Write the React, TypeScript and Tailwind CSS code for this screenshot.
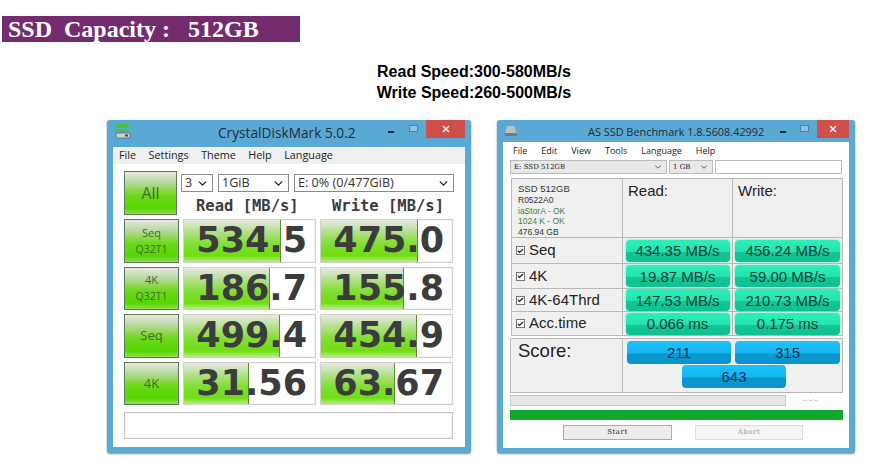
import { Check, ChevronDown, X } from "lucide-react";

const cdmRows = [
  { top: "Seq", bottom: "Q32T1", read: "534.5", readBar: "w-[97px]", write: "475.0", writeBar: "w-[97px]" },
  { top: "4K", bottom: "Q32T1", read: "186.7", readBar: "w-[86px]", write: "155.8", writeBar: "w-[83px]" },
  { top: "Seq", bottom: "", read: "499.4", readBar: "w-[96px]", write: "454.9", writeBar: "w-[96px]" },
  { top: "4K", bottom: "", read: "31.56", readBar: "w-[65px]", write: "63.67", writeBar: "w-[74px]" },
];

const ssdRows = [
  { label: "Seq", read: "434.35 MB/s", write: "456.24 MB/s", h: "h-[26px]" },
  { label: "4K", read: "19.87 MB/s", write: "59.00 MB/s", h: "h-[25px]" },
  { label: "4K-64Thrd", read: "147.53 MB/s", write: "210.73 MB/s", h: "h-[23px]" },
  { label: "Acc.time", read: "0.066 ms", write: "0.175 ms", h: "h-[24px]" },
];

function TitleButtons({ closeWidth, gap }: { closeWidth: string; gap: string }) {
  return (
    <div className="flex shrink-0 items-start">
      <div className={`mt-[11px] ${gap} h-[2px] w-[6px] bg-[#1d2b36]`} />
      <div className="mt-[5px] mr-[8px] h-[7px] w-[9px] border border-[#4b83a6] bg-[#8cc4e2]" />
      <div className={`flex h-[18px] ${closeWidth} items-center justify-center bg-[#cf4f4b]`}>
        <X size={10} strokeWidth={3} className="text-white" />
      </div>
    </div>
  );
}

function CdmSelect({ label, width }: { label: string; width: string }) {
  return (
    <div className={`flex h-[18px] ${width} items-center justify-between border border-[#8a8a8a] bg-white pl-[3px] pr-[3px] text-[12.6px] text-[#333]`}>
      <span>{label}</span>
      <ChevronDown size={13} strokeWidth={2.5} className="text-[#222]" />
    </div>
  );
}

function CdmValue({ value, bar }: { value: string; bar: string }) {
  return (
    <div className="relative h-full w-[133px] overflow-hidden border border-[#d0d0d0] bg-white shadow-[inset_0_0_1px_#999]">
      <div className={`absolute inset-y-0 left-0 ${bar} border-r border-[#5c8f33] bg-[linear-gradient(#e6eae2_0%,#b4e08c_28%,#80de30_58%,#70de14_85%,#b4ee80_100%)]`} />
      <div className="relative flex h-full items-center justify-end pr-[8px] font-['DejaVu_Sans'] text-[35px] font-bold leading-none text-[#3c3c3c]">
        {value}
      </div>
    </div>
  );
}

function CdmButton({ top, bottom }: { top: string; bottom: string }) {
  return (
    <div className="flex h-full w-[55px] flex-col items-center justify-center border border-[#5f7a5a] bg-[linear-gradient(#e4e8e0_0%,#b9d8a0_25%,#6ed81c_55%,#55d600_85%,#8fe050_100%)] text-center text-[#3f6b2c]">
      <div className={bottom ? "text-[11px] leading-[16px]" : "text-[13px]"}>{top}</div>
      {bottom && <div className="text-[10.5px] leading-[16px]">{bottom}</div>}
    </div>
  );
}

function CrystalDiskMark() {
  return (
    <div className="flex h-[333px] w-[364px] flex-col rounded-[3px] bg-[#5aa9d4] px-[6px] pb-[6px] font-['Open_Sans'] shadow-[0_1px_2px_#888]">
      <div className="flex h-[27px] shrink-0 items-start">
        <svg width="16" height="16" viewBox="0 0 16 16" className="mt-[3px] ml-[2px] shrink-0">
          <rect x="1" y="1" width="13" height="4" rx="1.5" fill="#47c23a" />
          <rect x="1" y="6" width="13" height="3" rx="1.5" fill="#47c23a" />
          <rect x="1" y="10" width="14" height="5" rx="1" fill="#ccd2d4" stroke="#58666c" strokeWidth="0.8" />
          <rect x="10" y="11.5" width="3" height="2" fill="#444" />
        </svg>
        <div className="mt-[3px] flex-1 whitespace-nowrap pl-[87px] text-[13.7px] leading-[19px] text-[#1e2c38]">CrystalDiskMark 5.0.2</div>
        <TitleButtons closeWidth="w-[39px]" gap="mr-[15px]" />
      </div>
      <div className="flex h-[17px] shrink-0 items-center gap-[12.5px] bg-[#f0f0f0] pl-[6px] text-[10.8px] text-[#222]">
        <span>File</span>
        <span>Settings</span>
        <span>Theme</span>
        <span>Help</span>
        <span>Language</span>
      </div>
      <div className="flex flex-1 flex-col bg-white px-[11px] pt-[7px]">
        <div className="flex h-[44px] gap-[4px]">
          <div className="flex w-[55px] items-center justify-center border border-[#5f7a5a] bg-[linear-gradient(#e4e8e0_0%,#b9d8a0_25%,#6ed81c_55%,#55d600_85%,#8fe050_100%)] text-[16px] text-[#3f6b2c]">
            All
          </div>
          <div className="flex flex-1 flex-col">
            <div className="mt-[3px] flex gap-[5px]">
              <CdmSelect label="3" width="w-[32px]" />
              <CdmSelect label="1GiB" width="w-[71px]" />
              <CdmSelect label="E: 0% (0/477GiB)" width="w-[160px]" />
            </div>
            <div className="mt-[4px] flex font-['DejaVu_Sans_Mono'] text-[15.5px] font-bold leading-[20px] text-[#3c3c3c]">
              <div className="w-[137px] pl-[15px]">Read [MB/s]</div>
              <div className="pl-[14px]">Write [MB/s]</div>
            </div>
          </div>
        </div>
        <div className="mt-[4px] flex flex-col gap-[4px]">
          {cdmRows.map((r, i) => (
            <div key={i} className="flex h-[43.5px] gap-[4px]">
              <CdmButton top={r.top} bottom={r.bottom} />
              <CdmValue value={r.read} bar={r.readBar} />
              <CdmValue value={r.write} bar={r.writeBar} />
            </div>
          ))}
        </div>
        <div className="mt-[7px] h-[27px] w-[329px] border border-[#c4c4c4] bg-white shadow-[inset_0_0_1px_#aaa]" />
      </div>
    </div>
  );
}

function SsdCheck() {
  return (
    <div className="mr-[4px] ml-[4px] flex h-[9px] w-[9px] shrink-0 items-center justify-center border border-[#777] bg-white">
      <Check size={8} strokeWidth={4} className="text-[#222]" />
    </div>
  );
}

function SsdPill({ value, width }: { value: string; width: string }) {
  return (
    <div className={`flex h-[22px] ${width} items-center justify-center rounded-[4px] bg-[linear-gradient(#2cf0b8_0%,#24e4ae_52%,#12c596_56%,#10c090_100%)] text-[15px] leading-none text-[#173f34] shadow-[0_0_2px_#3fe8bd]`}>
      {value}
    </div>
  );
}

function ScorePill({ value, width }: { value: string; width: string }) {
  return (
    <div className={`flex h-[23px] ${width} items-center justify-center rounded-[4px] bg-[linear-gradient(#1cc3fb_0%,#14b6f2_52%,#0a97cf_56%,#0a94cc_100%)] text-[15px] leading-none text-[#0f3350]`}>
      {value}
    </div>
  );
}

function AsSsd() {
  return (
    <div className="flex h-[333px] w-[358px] flex-col rounded-[3px] bg-[#5aa9d4] px-[6px] pb-[5px] font-['Liberation_Sans'] shadow-[0_1px_2px_#888]">
      <div className="flex h-[22px] shrink-0 items-start">
        <svg width="14" height="14" viewBox="0 0 14 14" className="mt-[3px] ml-[1px] shrink-0">
          <path d="M1 10 L3 3 H10 L13 10 Z" fill="#b9c0c2" />
          <path d="M4 3 L6 1.5 L8 3 Z" fill="#8d9698" />
          <rect x="1" y="10" width="12" height="3" fill="#6f7a7d" />
        </svg>
        <div className="mt-[3px] min-w-0 flex-1 whitespace-nowrap pl-[70px] font-['Open_Sans'] text-[10.9px] leading-[18px] text-[#1e2c38]">AS SSD Benchmark 1.8.5608.42992</div>
        <TitleButtons closeWidth="w-[32px]" gap="mr-[14px]" />
      </div>
      <div className="flex flex-1 flex-col bg-white px-[7px]">
        <div className="flex h-[18px] shrink-0 items-center gap-[14px] pl-[3px] font-['Open_Sans'] text-[9px] text-[#222]">
          <span>File</span>
          <span>Edit</span>
          <span>View</span>
          <span>Tools</span>
          <span>Language</span>
          <span>Help</span>
        </div>
        <div className="flex h-[14px] shrink-0 gap-[2px] font-['DejaVu_Serif'] text-[7px] text-[#222]">
          <div className="flex w-[157px] items-center justify-between border border-[#bbb] bg-[#e8e8e8] px-[3px]">
            <span>E: SSD 512GB</span>
            <ChevronDown size={10} className="text-[#444]" />
          </div>
          <div className="flex w-[44px] items-center justify-between border border-[#bbb] bg-[#e8e8e8] px-[3px]">
            <span>1 GB</span>
            <ChevronDown size={10} className="text-[#444]" />
          </div>
          <div className="flex-1 border border-[#bbb] bg-white" />
        </div>
        <div className="mt-[4px] ml-[1px] flex h-[59px] w-[332px] shrink-0 border border-b-0 border-[#b8b8b8] bg-[#f0f0f0]">
          <div className="w-[111px] border-r border-[#b8b8b8] pl-[6px] pt-[3px] text-[8.5px] leading-[10.5px] text-[#333]">
            <div className="text-[9.5px] leading-[13px]">SSD 512GB</div>
            <div>R0522A0</div>
            <div className="text-[#3f7f3f]">iaStorA - OK</div>
            <div className="text-[#3f7f3f]">1024 K - OK</div>
            <div>476.94 GB</div>
          </div>
          <div className="w-[110px] border-r border-[#b8b8b8] pl-[5px] pt-[1px] text-[15px] text-[#222]">Read:</div>
          <div className="pl-[5px] pt-[1px] text-[15px] text-[#222]">Write:</div>
        </div>
        <div className="ml-[1px] w-[332px] border-b border-[#b8b8b8] bg-[#f0f0f0]">
          {ssdRows.map((r) => (
            <div key={r.label} className={`flex ${r.h} border-x border-t border-[#b8b8b8]`}>
              <div className="flex w-[111px] items-center border-r border-[#b8b8b8] text-[15px] text-[#222]">
                <SsdCheck />
                {r.label}
              </div>
              <div className="flex w-[110px] items-center justify-center border-r border-[#b8b8b8]">
                <SsdPill value={r.read} width="w-[104px]" />
              </div>
              <div className="flex flex-1 items-center justify-center">
                <SsdPill value={r.write} width="w-[105px]" />
              </div>
            </div>
          ))}
        </div>
        <div className="mt-[2px] flex h-[55px] w-[333px] shrink-0 border border-[#b8b8b8] bg-[#f0f0f0]">
          <div className="w-[112px] border-r border-[#b8b8b8] pl-[7px] text-[18.5px] leading-[24px] text-[#222]">Score:</div>
          <div className="flex-1 pl-[4px] pt-[2px]">
            <div className="flex gap-[4px]">
              <ScorePill value="211" width="w-[104px]" />
              <ScorePill value="315" width="w-[105px]" />
            </div>
            <div className="mt-[1px] ml-[55px]">
              <ScorePill value="643" width="w-[104px]" />
            </div>
          </div>
        </div>
        <div className="mt-[2px] flex h-[11px] shrink-0 items-center">
          <div className="h-full w-[276px] border border-[#c8c8c8] bg-[#e6e6e6]" />
          <div className="pl-[17px] text-[6px] text-[#777]">--:--:--</div>
        </div>
        <div className="mt-[4px] h-[10px] w-[333px] shrink-0 bg-[#10a82e]" />
        <div className="mt-[5px] flex h-[15px] shrink-0 gap-[23px] pl-[53px] font-['DejaVu_Serif'] text-[7px] tracking-[0.5px]">
          <div className="flex w-[109px] items-center justify-center border border-[#aaa] bg-[#ececec] text-[#222]">Start</div>
          <div className="flex w-[108px] items-center justify-center border border-[#ddd] bg-[#f5f5f5] text-[#999]">Abort</div>
        </div>
      </div>
    </div>
  );
}

export default function App() {
  return (
    <div className="h-[472px] w-[882px] overflow-hidden bg-white pt-[16px]">
      <div className="ml-[2px] flex h-[26px] w-[298px] items-center whitespace-pre bg-[#742c6e] pl-[6px] font-['Liberation_Serif'] text-[24px] font-bold text-white">
        {"SSD  Capacity :   512GB"}
      </div>
      <div className="mt-[19px] pl-[66px] text-center font-['Liberation_Sans'] text-[16px] font-bold leading-[21px] text-black">
        <div>Read Speed:300-580MB/s</div>
        <div>Write Speed:260-500MB/s</div>
      </div>
      <div className="mt-[17px] ml-[107px] flex gap-[26px]">
        <CrystalDiskMark />
        <AsSsd />
      </div>
    </div>
  );
}
